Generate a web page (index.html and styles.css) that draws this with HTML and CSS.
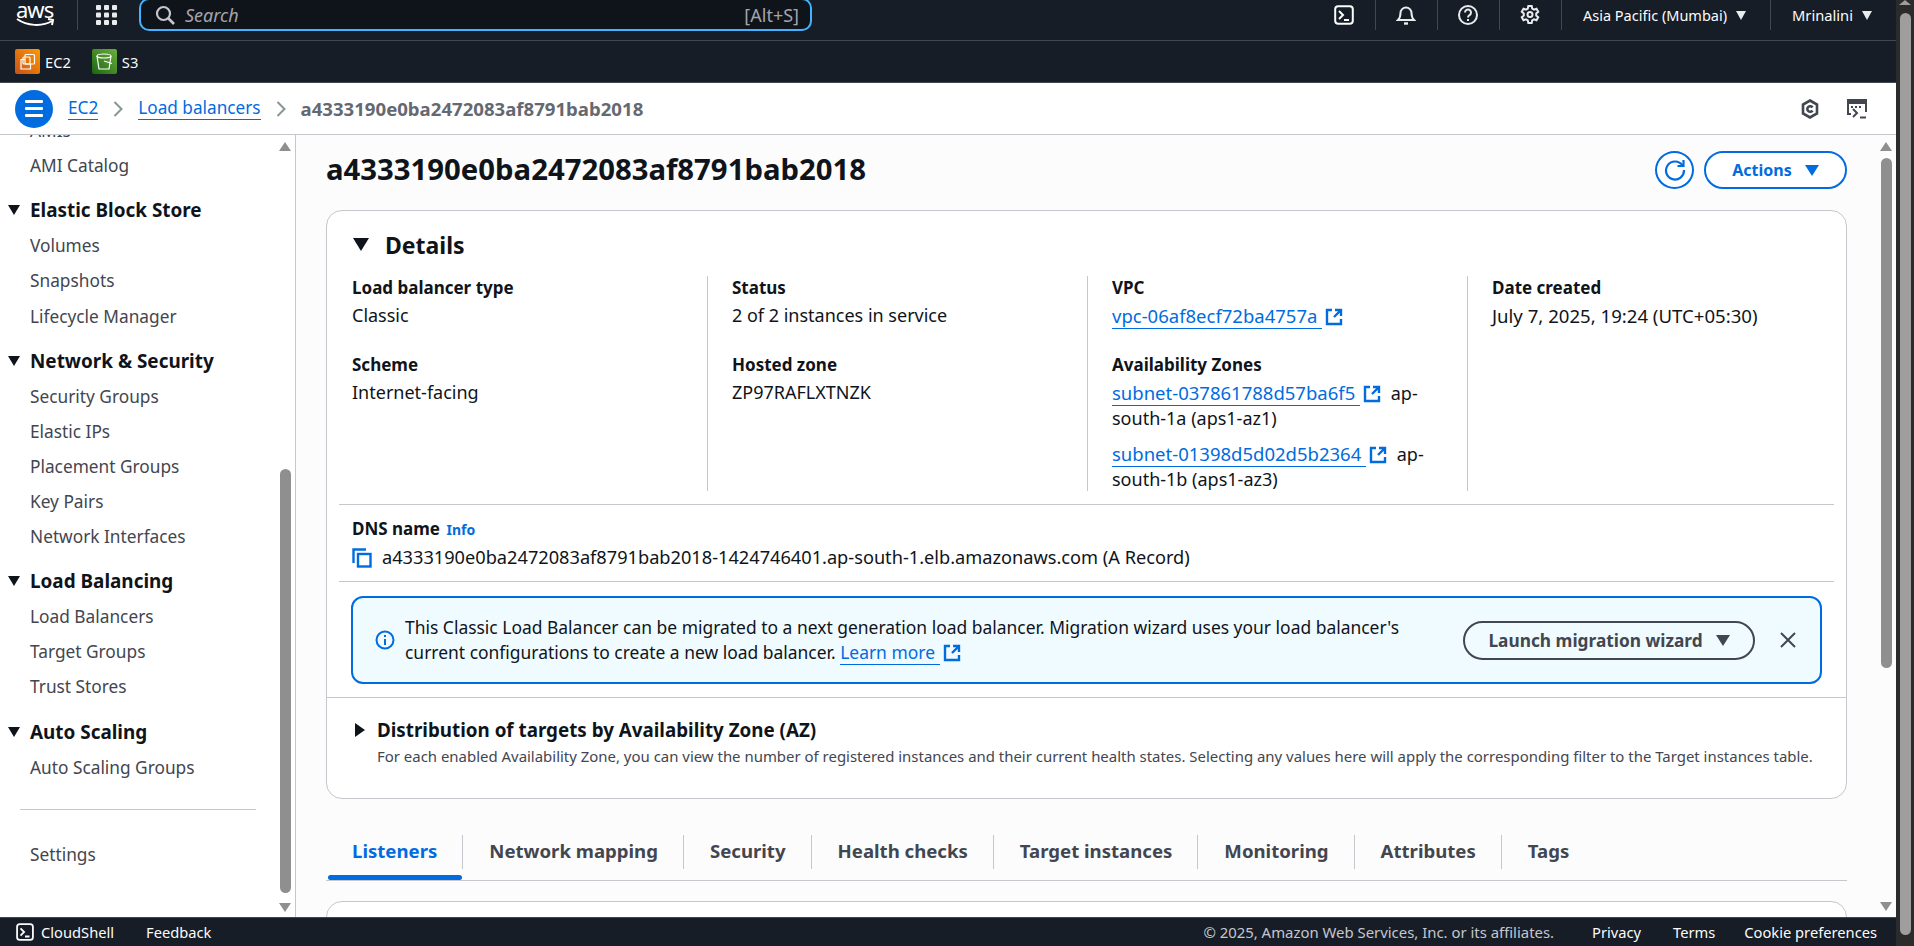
FILE: index.html
```html
<!DOCTYPE html>
<html lang="en">
<head>
    <meta charset="UTF-8">
    <title>Load balancer details | EC2</title>
    <link rel="stylesheet" href="styles.css">
</head>
<body>
    <svg class="defs" width="0" height="0">
        <symbol id="ext" viewBox="0 0 18 18">
            <path d="M7 2H2v14h14v-5M10 2h6v6M16 2L9 9" fill="none" stroke="currentColor" stroke-width="2.4"/>
        </symbol>
        <symbol id="shell" viewBox="0 0 20 20">
            <rect x="1.2" y="1.2" width="17.6" height="17.6" rx="3" fill="none" stroke="currentColor" stroke-width="2"/>
            <path d="M5 6l4 4-4 4M10 15h5" fill="none" stroke="currentColor" stroke-width="2"/>
        </symbol>
    </svg>

    <div class="window">
        <div class="app">
            <header class="topnav">
                <div class="logo">
                    <span class="logo-text">aws</span>
                    <svg class="logo-smile" width="40" height="9" viewBox="0 0 40 9"><path d="M1 1c10 7 25 8 35 2M32 1l5 1-1 5" fill="none" stroke="#fff" stroke-width="2"/></svg>
                </div>
                <span class="nav-sep nav-sep-logo"></span>
                <svg class="grid-icon" width="22" height="20" viewBox="0 0 22 20" fill="#e9ebed">
                    <rect width="5" height="5" rx="1"/><rect x="8" width="5" height="5" rx="1"/><rect x="16" width="5" height="5" rx="1"/>
                    <rect y="7.500" width="5" height="5" rx="1"/><rect x="8" y="7.500" width="5" height="5" rx="1"/><rect x="16" y="7.500" width="5" height="5" rx="1"/>
                    <rect y="15" width="5" height="5" rx="1"/><rect x="8" y="15" width="5" height="5" rx="1"/><rect x="16" y="15" width="5" height="5" rx="1"/>
                </svg>
                <div class="search">
                    <svg width="20" height="20" viewBox="0 0 20 20"><circle cx="8.500" cy="8.500" r="6.500" fill="none" stroke="#c6c6cd" stroke-width="2.200"/><path d="M13 13l6 6" stroke="#c6c6cd" stroke-width="2.600"/></svg>
                    <span class="search-text">Search</span>
                    <span class="search-key">[Alt+S]</span>
                </div>
                <div class="nav-tools">
                    <svg class="tool tool-shell" width="20" height="20"><use href="#shell"/></svg>
                    <span class="nav-sep"></span>
                    <svg class="tool" width="20" height="22" viewBox="0 0 20 22" fill="none" stroke="#e9ebed" stroke-width="2"><path d="M2 16c2-2 2.500-3 2.500-7a5.500 5.500 0 0 1 11 0c0 4 .5 5 2.500 7z"/><path d="M8 19.500h4" stroke-width="2.400"/></svg>
                    <span class="nav-sep"></span>
                    <svg class="tool" width="20" height="20" viewBox="0 0 20 20" fill="none" stroke="#e9ebed" stroke-width="2"><circle cx="10" cy="10" r="9"/><path d="M7 7.500a3 3 0 1 1 4.500 2.600c-1 .6-1.500 1-1.500 2.400M10 14v2"/></svg>
                    <span class="nav-sep"></span>
                    <svg class="tool" width="20" height="20" viewBox="0 0 20 20" fill="none" stroke="#e9ebed" stroke-width="2"><path d="M8.300 1h3.400l.5 2.600 1.800 1 2.500-.9 1.700 3-2 1.700v2.100l2 1.700-1.700 3-2.500-.9-1.800 1-.5 2.600H8.300l-.5-2.600-1.800-1-2.500.9-1.700-3 2-1.700V8.400l-2-1.700 1.700-3 2.500.9 1.800-1z"/><circle cx="10" cy="9.500" r="2.500"/></svg>
                    <span class="nav-sep"></span>
                    <span class="nav-menu region">Asia Pacific (Mumbai) <i class="caret caret-light"></i></span>
                    <span class="nav-sep"></span>
                    <span class="nav-menu user">Mrinalini <i class="caret caret-light"></i></span>
                </div>
            </header>

            <nav class="shortcuts">
                <span class="shortcut">
                    <span class="svc svc-ec2">
                        <svg width="19" height="19" viewBox="0 0 19 19" fill="none" stroke="#fff" stroke-width="1.200"><rect x="7" y="2.500" width="9.500" height="9.500" rx="1"/><rect x="5" y="5" width="7" height="7" rx="1"/><path d="M7 7.500H3V17h9.500v-5"/></svg>
                    </span>
                    EC2
                </span>
                <span class="shortcut">
                    <span class="svc svc-s3">
                        <svg width="19" height="19" viewBox="0 0 19 19" fill="none" stroke="#fff" stroke-width="1.200"><ellipse cx="9" cy="4" rx="7" ry="2"/><path d="M2 4l2 13h10l2-13M9 9l8 2.500"/></svg>
                    </span>
                    S3
                </span>
            </nav>

            <div class="crumbs">
                <span class="menu-btn"><i></i><i></i><i></i></span>
                <a class="crumb-link">EC2</a>
                <svg class="chev" width="10" height="16" viewBox="0 0 10 16"><path d="M1.500 1l7 7-7 7" fill="none" stroke="#879596" stroke-width="2"/></svg>
                <a class="crumb-link">Load balancers</a>
                <svg class="chev" width="10" height="16" viewBox="0 0 10 16"><path d="M1.500 1l7 7-7 7" fill="none" stroke="#879596" stroke-width="2"/></svg>
                <span class="crumb-current">a4333190e0ba2472083af8791bab2018</span>
                <span class="crumb-tools">
                    <svg width="18" height="20" viewBox="0 0 18 20" fill="none" stroke="#424650" stroke-width="2.600"><path d="M9 1.500l7 4v9l-7 4-7-4v-9z"/><path d="M11.500 8.500A2.800 2.800 0 1 0 11.500 11.500"/></svg>
                    <svg width="20" height="20" viewBox="0 0 20 20" fill="none" stroke="#424650" stroke-width="2"><path d="M4 15H1V1h18v12"/><path d="M1 3.500h18" stroke-width="3"/><path d="M4 8h2M8 8h2M12 8h2" stroke-width="2"/><path d="M6 10l4 4-4 4M13 18.500h6"/></svg>
                </span>
            </div>

            <div class="workspace">
                <aside class="sidebar">
                    <div class="side-list">
                        <a class="side-item">AMIs</a>
                        <a class="side-item">AMI Catalog</a>
                        <h3 class="side-head"><i class="caret caret-dark"></i>Elastic Block Store</h3>
                        <a class="side-item">Volumes</a>
                        <a class="side-item">Snapshots</a>
                        <a class="side-item">Lifecycle Manager</a>
                        <h3 class="side-head"><i class="caret caret-dark"></i>Network &amp; Security</h3>
                        <a class="side-item">Security Groups</a>
                        <a class="side-item">Elastic IPs</a>
                        <a class="side-item">Placement Groups</a>
                        <a class="side-item">Key Pairs</a>
                        <a class="side-item">Network Interfaces</a>
                        <h3 class="side-head"><i class="caret caret-dark"></i>Load Balancing</h3>
                        <a class="side-item">Load Balancers</a>
                        <a class="side-item">Target Groups</a>
                        <a class="side-item">Trust Stores</a>
                        <h3 class="side-head"><i class="caret caret-dark"></i>Auto Scaling</h3>
                        <a class="side-item">Auto Scaling Groups</a>
                        <hr class="side-rule">
                        <a class="side-item">Settings</a>
                    </div>
                    <div class="scrollbar scrollbar-side">
                        <i class="arrow-up"></i>
                        <i class="thumb"></i>
                        <i class="arrow-down"></i>
                    </div>
                </aside>

                <main class="main">
                    <div class="content">
                        <div class="page-head">
                            <h1>a4333190e0ba2472083af8791bab2018</h1>
                            <span class="refresh">
                                <svg width="22" height="22" viewBox="0 0 22 22" fill="none" stroke="#006ce0" stroke-width="2.200"><path d="M18.500 6.500A9 9 0 1 0 20 11"/><path d="M13.500 7h6V1"/></svg>
                            </span>
                            <button class="btn-actions">Actions <i class="caret caret-blue"></i></button>
                        </div>

                        <section class="card">
                            <h2 class="card-title"><i class="caret caret-title"></i>Details</h2>
                            <div class="cols">
                                <div class="col">
                                    <div class="field">
                                        <div class="label">Load balancer type</div>
                                        <div class="value">Classic</div>
                                    </div>
                                    <div class="field">
                                        <div class="label">Scheme</div>
                                        <div class="value">Internet-facing</div>
                                    </div>
                                </div>
                                <div class="col">
                                    <div class="field">
                                        <div class="label">Status</div>
                                        <div class="value">2 of 2 instances in service</div>
                                    </div>
                                    <div class="field">
                                        <div class="label">Hosted zone</div>
                                        <div class="value">ZP97RAFLXTNZK</div>
                                    </div>
                                </div>
                                <div class="col">
                                    <div class="field">
                                        <div class="label">VPC</div>
                                        <div class="value"><a class="link">vpc-06af8ecf72ba4757a </a><svg class="ext" width="18" height="18"><use href="#ext"/></svg></div>
                                    </div>
                                    <div class="field">
                                        <div class="label">Availability Zones</div>
                                        <div class="value az"><a class="link">subnet-037861788d57ba6f5 </a><svg class="ext" width="18" height="18"><use href="#ext"/></svg> ap-south-1a (aps1-az1)</div>
                                        <div class="value az"><a class="link">subnet-01398d5d02d5b2364 </a><svg class="ext" width="18" height="18"><use href="#ext"/></svg> ap-south-1b (aps1-az3)</div>
                                    </div>
                                </div>
                                <div class="col">
                                    <div class="field">
                                        <div class="label">Date created</div>
                                        <div class="value">July 7, 2025, 19:24 (UTC+05:30)</div>
                                    </div>
                                </div>
                            </div>

                            <div class="dns">
                                <div class="label">DNS name <a class="info">Info</a></div>
                                <div class="dns-value">
                                    <svg width="20" height="20" viewBox="0 0 20 20" fill="none" stroke="#006ce0" stroke-width="2.400"><path d="M1.500 15V1.500H14"/><rect x="6" y="6" width="12.500" height="12.500"/></svg>
                                    a4333190e0ba2472083af8791bab2018-1424746401.ap-south-1.elb.amazonaws.com (A Record)
                                </div>
                            </div>

                            <div class="alert-row">
                                <div class="alert">
                                    <svg class="alert-icon" width="20" height="20" viewBox="0 0 20 20" fill="none" stroke="#006ce0" stroke-width="2"><circle cx="10" cy="10" r="8.500"/><path d="M10 9v6M10 5v2"/></svg>
                                    <p>This Classic Load Balancer can be migrated to a next generation load balancer. Migration wizard uses your load balancer's current configurations to create a new load balancer. <a class="link">Learn more </a><svg class="ext" width="18" height="18"><use href="#ext"/></svg></p>
                                    <button class="btn-wizard">Launch migration wizard <i class="caret caret-grey"></i></button>
                                    <svg class="alert-close" width="18" height="18" viewBox="0 0 18 18"><path d="M2 2l14 14M16 2L2 16" stroke="#424650" stroke-width="2"/></svg>
                                </div>
                            </div>

                            <div class="dist">
                                <h3><i class="caret-right"></i>Distribution of targets by Availability Zone (AZ)</h3>
                                <p>For each enabled Availability Zone, you can view the number of registered instances and their current health states. Selecting any values here will apply the corresponding filter to the Target instances table.</p>
                            </div>
                        </section>

                        <div class="tabs">
                            <span class="tab tab-active">Listeners</span>
                            <span class="tab">Network mapping</span>
                            <span class="tab">Security</span>
                            <span class="tab">Health checks</span>
                            <span class="tab">Target instances</span>
                            <span class="tab">Monitoring</span>
                            <span class="tab">Attributes</span>
                            <span class="tab tab-last">Tags</span>
                        </div>

                        <section class="card card-next"></section>
                    </div>
                    <div class="scrollbar scrollbar-main">
                        <i class="arrow-up"></i>
                        <i class="thumb"></i>
                        <i class="arrow-down"></i>
                    </div>
                </main>
            </div>

            <footer class="footer">
                <svg width="18" height="18"><use href="#shell"/></svg>
                <span class="foot-shell">CloudShell</span>
                <span class="foot-feedback">Feedback</span>
                <span class="foot-copy">© 2025, Amazon Web Services, Inc. or its affiliates.</span>
                <span class="foot-link">Privacy</span>
                <span class="foot-link">Terms</span>
                <span class="foot-link foot-cookie">Cookie preferences</span>
            </footer>
        </div>

        <div class="scrollbar scrollbar-page">
            <i class="arrow-up"></i>
            <i class="thumb"></i>
        </div>
    </div>
</body>
</html>
```

FILE: styles.css
```css
* {
    box-sizing: border-box;
}
body {
    margin: 0;
    font-family: "Noto Sans", "Open Sans", sans-serif;
    font-size: 15px;
    color: #0f141a;
    overflow: hidden;
}
h1, h2, h3, p {
    margin: 0;
}
i {
    display: block;
    font-style: normal;
}
.defs {
    position: absolute;
}
.window {
    display: flex;
    width: 1914px;
    height: 946px;
    overflow: hidden;
}
.app {
    width: 1896px;
    display: flex;
    flex-direction: column;
}

/* top bars */
.topnav {
    height: 41px;
    flex: none;
    display: flex;
    align-items: flex-start;
    background-color: #161d26;
    border-bottom: 1px solid #424650;
    color: #fbfbfb;
}
.logo {
    width: 77px;
    height: 40px;
    padding-left: 16px;
    flex: none;
    overflow: hidden;
}
.logo-text {
    display: block;
    margin-top: -5px;
    font-size: 22px;
    line-height: 28px;
    letter-spacing: -1px;
    color: #fff;
}
.logo-smile {
    display: block;
    margin-top: -5px;
}
.nav-sep {
    width: 1px;
    height: 30px;
    flex: none;
    background-color: #424650;
}
.grid-icon {
    margin: 5px 21px 0 18px;
    flex: none;
}
.search {
    width: 673px;
    height: 33px;
    margin-top: -2px;
    padding: 0 11px 0 14px;
    display: flex;
    align-items: center;
    gap: 10px;
    background-color: #0f141a;
    border: 2px solid #42b4ff;
    border-radius: 10px;
    color: #a4a4ad;
    font-size: 18px;
}
.search-text {
    font-style: italic;
}
.search-key {
    margin-left: auto;
}
.nav-tools {
    margin-left: auto;
    height: 30px;
    display: flex;
    align-items: center;
}
.tool {
    margin: -1px 20.500px 0;
    flex: none;
}
.nav-menu {
    padding: 0 24px 0 21px;
    display: flex;
    align-items: center;
    gap: 9px;
    font-size: 14.700px;
}
.region {
    font-size: 14.500px;
}
.shortcuts {
    height: 41px;
    flex: none;
    padding-left: 15px;
    display: flex;
    align-items: center;
    gap: 21px;
    background-color: #161d26;
    color: #fbfbfb;
    font-size: 14.700px;
}
.shortcut {
    display: flex;
    align-items: center;
    gap: 5px;
}
.svc {
    width: 25px;
    height: 25px;
    display: flex;
    align-items: center;
    justify-content: center;
    border-radius: 2px;
}
.svc-ec2 {
    background: linear-gradient(45deg, #c8511b, #f90);
}
.svc-s3 {
    background: linear-gradient(45deg, #1b660f, #6cae3e);
}

/* breadcrumbs */
.crumbs {
    height: 53px;
    flex: none;
    padding: 0 29px 0 15px;
    display: flex;
    align-items: center;
    background-color: #fff;
    border-top: 1px solid #424650;
    border-bottom: 1px solid #c6c6cd;
    font-size: 17.200px;
}
.menu-btn {
    width: 38px;
    height: 38px;
    margin-right: 15px;
    display: flex;
    flex-direction: column;
    justify-content: center;
    align-items: center;
    gap: 4px;
    background-color: #006ce0;
    border-radius: 50%;
}
.menu-btn i {
    width: 18px;
    height: 3px;
    background-color: #fff;
    border-radius: 1px;
}
.crumb-link {
    color: #006ce0;
    border-bottom: 1px solid #006ce0;
    line-height: 22px;
}
.chev {
    margin: 0 15px;
}
.crumb-current {
    color: #656871;
    font-size: 18.600px;
    font-weight: 700;
}
.crumb-tools {
    margin-left: auto;
    display: flex;
    align-items: center;
    gap: 28px;
}

/* sidebar */
.workspace {
    flex: 1;
    min-height: 0;
    display: flex;
}
.sidebar {
    width: 296px;
    flex: none;
    display: flex;
    overflow: hidden;
    background-color: #fff;
    border-right: 1px solid #c6c6cd;
}
.side-list {
    flex: 1;
    margin-top: -22.500px;
}
.side-item {
    display: flex;
    align-items: center;
    height: 35.100px;
    padding: 1px 0 0 30px;
    color: #424650;
    font-size: 17.300px;
}
.side-head {
    height: 35.100px;
    margin-top: 10px;
    display: flex;
    align-items: center;
    padding-left: 8px;
    gap: 10px;
    font-size: 18.900px;
    font-weight: 700;
}
.side-item + .side-item:nth-child(2) {
    margin-bottom: 2px;
}
.side-rule {
    width: 236px;
    margin: 25px 0 26px 20px;
    border: none;
    border-top: 1px solid #c6c6cd;
}

/* scrollbars */
.scrollbar {
    flex: none;
    display: flex;
    flex-direction: column;
    align-items: center;
}
.thumb {
    background-color: #8f8f8f;
    border-radius: 6px;
}
.arrow-up, .arrow-down {
    width: 0;
    height: 0;
    border-left: 6.500px solid transparent;
    border-right: 6.500px solid transparent;
}
.arrow-up {
    border-bottom: 9px solid #8f8f8f;
}
.arrow-down {
    border-top: 9px solid #8f8f8f;
}
.scrollbar-side {
    width: 22px;
    padding-top: 7px;
    margin-right: -1px;
}
.scrollbar-side .thumb {
    width: 11px;
    height: 424px;
    margin: 318px 0 10px;
}
.scrollbar-main {
    width: 20px;
    padding-top: 7px;
}
.scrollbar-main .thumb {
    width: 11px;
    height: 510px;
    margin: 7px 0 234px;
}
.scrollbar-page {
    width: 18px;
    background-color: #2b2b2b;
}
.scrollbar-page .arrow-up {
    border-bottom: 5px solid #9e9e9e;
}
.scrollbar-page .thumb {
    width: 11px;
    height: 922px;
    margin-top: 8px;
    background-color: #9e9e9e;
}

/* main content */
.main {
    flex: 1;
    min-width: 0;
    display: flex;
    background-color: #fcfcfc;
}
.content {
    flex: 1;
    min-width: 0;
    padding: 16px 29px 0 30px;
    overflow: hidden;
}
.page-head {
    height: 38px;
    display: flex;
    align-items: center;
}
.page-head h1 {
    padding-bottom: 2px;
    font-size: 29.300px;
    font-weight: 700;
}
.refresh {
    width: 39px;
    height: 38px;
    margin-left: auto;
    display: flex;
    align-items: center;
    justify-content: center;
    background-color: #fff;
    border: 2px solid #006ce0;
    border-radius: 50%;
}
.btn-actions {
    width: 143px;
    height: 38px;
    margin-left: 10px;
    display: flex;
    align-items: center;
    justify-content: center;
    gap: 13px;
    background-color: #fff;
    border: 2px solid #006ce0;
    border-radius: 20px;
    color: #006ce0;
    font: 700 16px "Noto Sans", sans-serif;
}
.card {
    margin-top: 21px;
    height: 589px;
    padding: 0 12px;
    background-color: #fff;
    border: 1px solid #c6c6cd;
    border-radius: 16px;
}
.card-title {
    height: 65px;
    padding: 2px 0 0 14px;
    display: flex;
    align-items: center;
    gap: 16px;
    font-size: 23px;
    font-weight: 700;
}
.cols {
    display: grid;
    grid-template-columns: 369px 380px 380px 1fr;
    height: 215px;
}
.col {
    padding: 0 24px;
    border-right: 1px solid #c6c6cd;
}
.col:first-child {
    padding-left: 13px;
}
.col:last-child {
    border-right: none;
}
.field {
    height: 78px;
}
.field .label {
    margin-top: -1px;
}
.label {
    font-weight: 700;
    font-size: 17px;
    line-height: 25px;
}
.value {
    margin-top: 3px;
    font-size: 18px;
    line-height: 25px;
}
.col:last-child .value {
    font-size: 18.600px;
}
.az + .az {
    margin-top: 10px;
}
.link {
    color: #006ce0;
    border-bottom: 1px solid #006ce0;
}
.value .link {
    font-size: 18.500px;
}
.ext {
    vertical-align: -3px;
    margin: 0 5px 0 3px;
    color: #006ce0;
}
.dns {
    margin-top: 13px;
    height: 78px;
    padding: 11px 13px 0;
    border-top: 1px solid #c6c6cd;
    border-bottom: 1px solid #c6c6cd;
}
.dns-value {
    display: flex;
    align-items: center;
    gap: 10px;
    margin-top: 3px;
    font-size: 18.200px;
    line-height: 25px;
}
.info {
    margin-left: 2px;
    color: #006ce0;
    font-size: 14px;
}
.alert-row {
    padding: 14px 24px 13px;
    margin: 0 -12px;
    border-bottom: 1px solid #c6c6cd;
}
.alert {
    height: 88px;
    padding: 0 23px 0 22px;
    display: flex;
    align-items: center;
    background-color: #f0fbff;
    border: 2px solid #006ce0;
    border-radius: 12px;
}
.alert-icon {
    flex: none;
    margin-right: 10px;
}
.alert p {
    width: 1040px;
    flex: none;
    font-size: 17.450px;
    line-height: 25px;
}
.btn-wizard {
    width: 292px;
    height: 39px;
    margin-left: auto;
    display: flex;
    align-items: center;
    justify-content: center;
    gap: 13px;
    background-color: transparent;
    border: 2px solid #424650;
    border-radius: 20px;
    color: #424650;
    font: 700 17.300px "Noto Sans", sans-serif;
}
.alert-close {
    margin-left: 24px;
    flex: none;
}
.dist {
    padding: 20px 0 0 16px;
}
.dist h3 {
    display: flex;
    align-items: center;
    gap: 12px;
    font-size: 18.800px;
    font-weight: 700;
    line-height: 24px;
}
.dist p {
    margin: 4px 0 0 22px;
    color: #424650;
    font-size: 14.950px;
    line-height: 20px;
    white-space: nowrap;
}
.tabs {
    margin-top: 36px;
    height: 46px;
    display: flex;
    align-items: flex-start;
    border-bottom: 1px solid #c6c6cd;
}
.tab {
    height: 34px;
    padding: 0 25px 3px 26px;
    display: flex;
    align-items: center;
    border-right: 1px solid #c6c6cd;
    color: #424650;
    font-size: 18.600px;
    font-weight: 700;
}
.tab-active {
    position: relative;
    color: #006ce0;
}
.tab-active::after {
    content: "";
    position: absolute;
    left: 2px;
    right: 0;
    top: 40px;
    height: 5px;
    background-color: #006ce0;
    border-radius: 3px;
}
.tab-last {
    border-right: none;
}
.card-next {
    margin-top: 20px;
}

/* footer */
.footer {
    height: 29px;
    flex: none;
    padding: 0 19px 0 16px;
    display: flex;
    align-items: center;
    background-color: #161d26;
    border-top: 1px solid #424650;
    color: #fbfbfb;
    font-size: 14.700px;
}
.footer svg {
    margin-right: 7px;
}
.foot-feedback {
    margin-left: 32px;
}
.foot-copy {
    margin-left: auto;
    margin-right: 6px;
    color: #c6c6cd;
    font-size: 14.900px;
}
.foot-link {
    margin-left: 32px;
}
.foot-cookie {
    margin-left: 29px;
}

/* carets */
.caret {
    width: 0;
    height: 0;
    flex: none;
    border-left: 6px solid transparent;
    border-right: 6px solid transparent;
    border-top: 10px solid #0f141a;
}
.caret-light {
    border-left-width: 5px;
    border-right-width: 5px;
    border-top: 9px solid #e9ebed;
}
.caret-blue {
    border-left-width: 7px;
    border-right-width: 7px;
    border-top: 11px solid #006ce0;
}
.caret-grey {
    border-left-width: 7px;
    border-right-width: 7px;
    border-top: 11px solid #424650;
}
.caret-title {
    border-left-width: 8px;
    border-right-width: 8px;
    border-top: 13px solid #0f141a;
}
.caret-right {
    width: 0;
    height: 0;
    flex: none;
    border-top: 7px solid transparent;
    border-bottom: 7px solid transparent;
    border-left: 10px solid #0f141a;
}
```
